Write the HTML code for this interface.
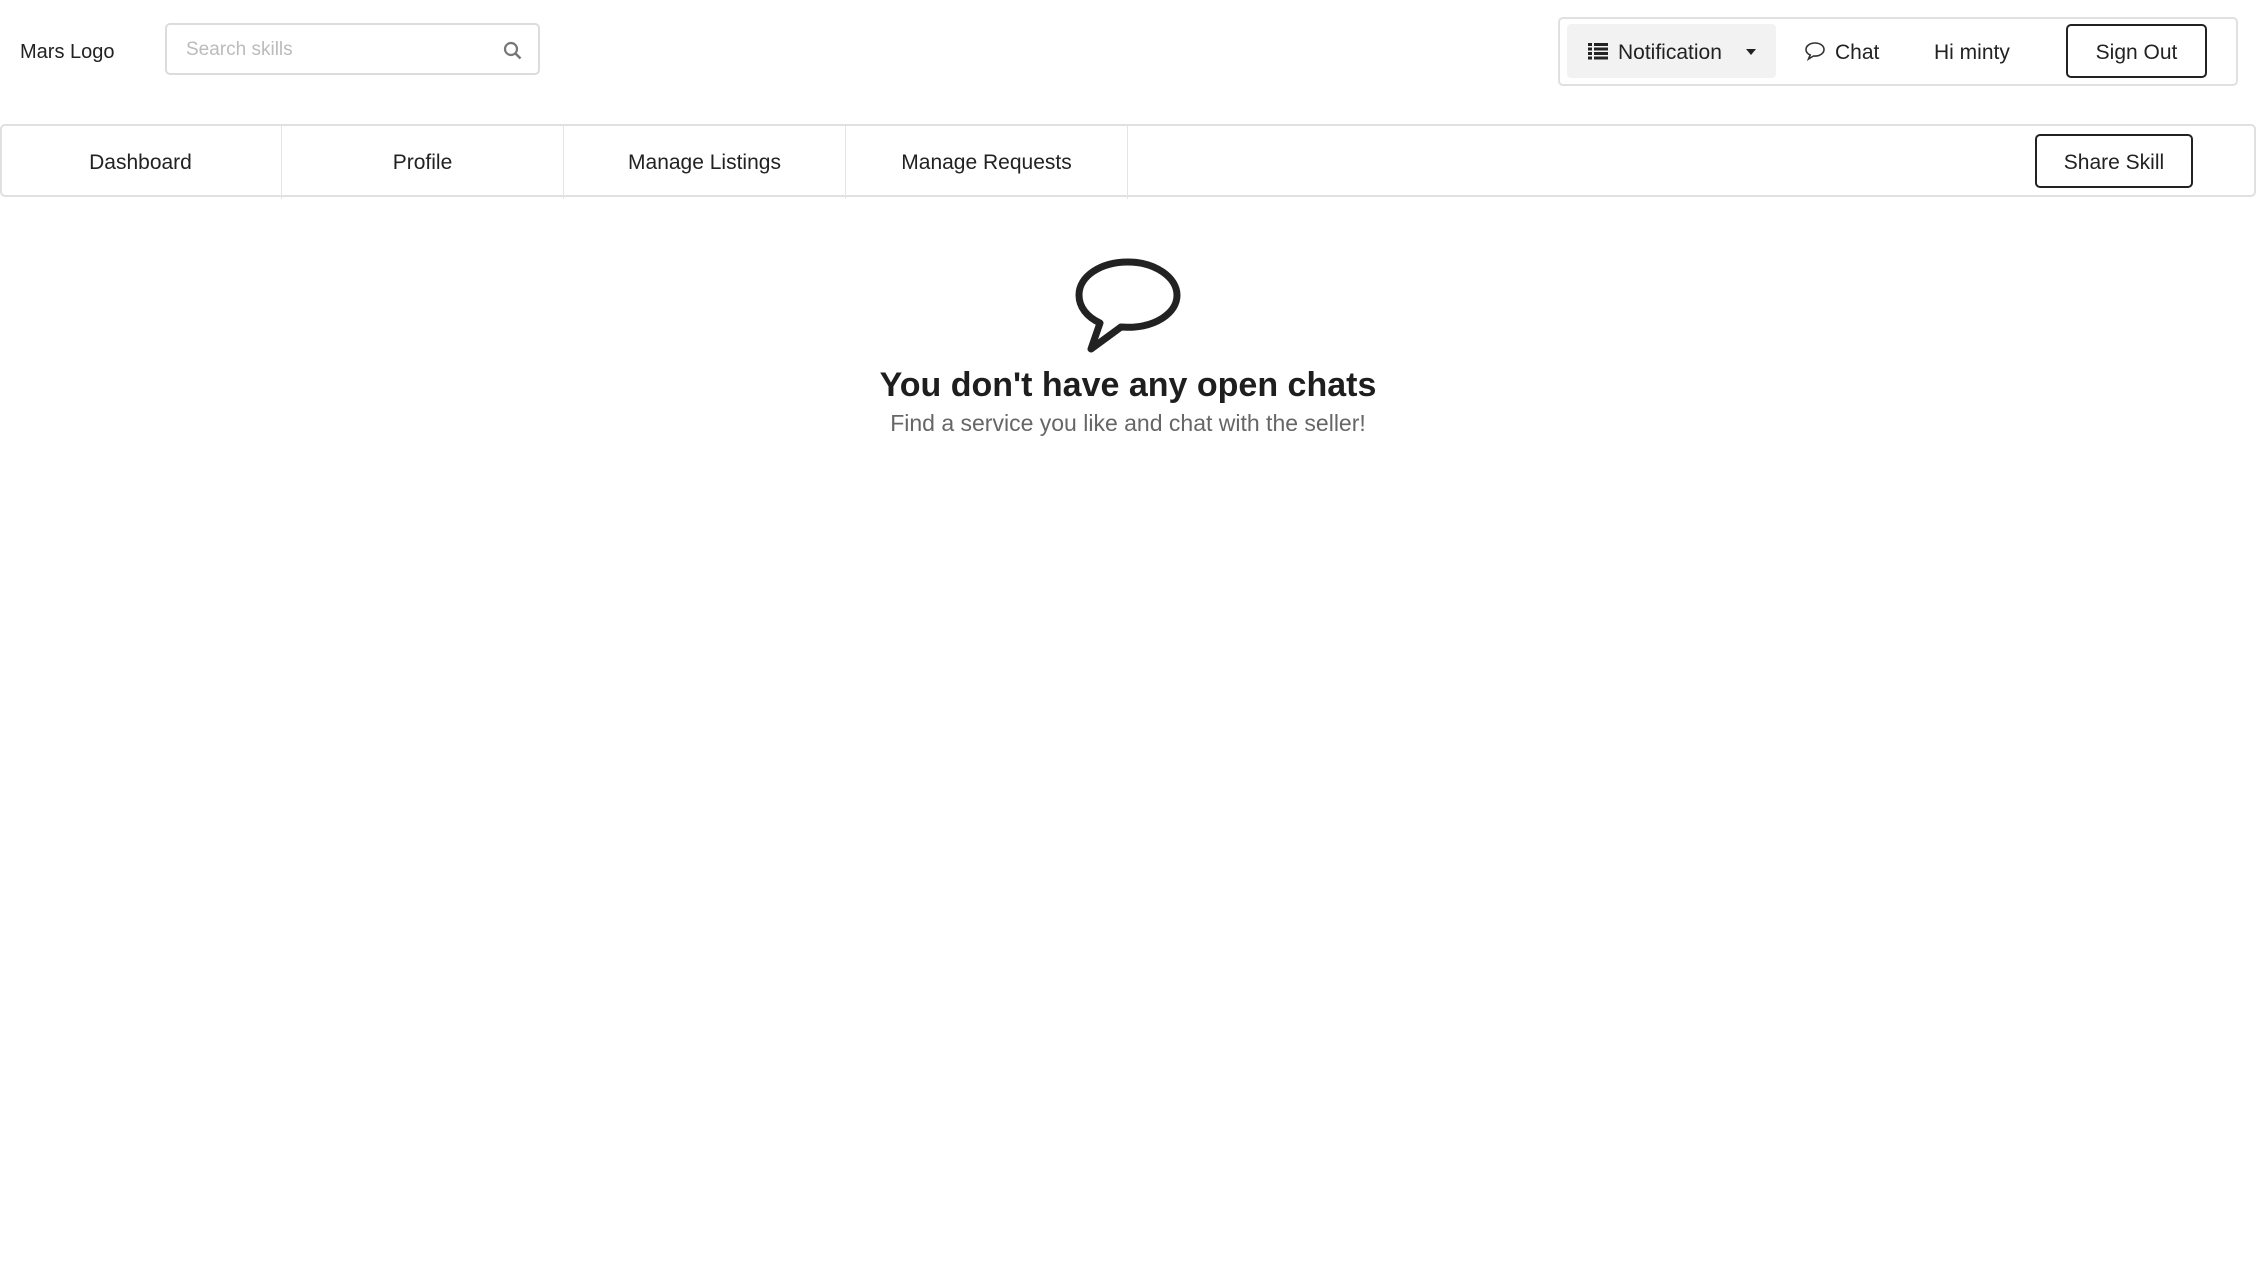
<!DOCTYPE html>
<html><head><style>
*{box-sizing:border-box;margin:0;padding:0}
body{width:2256px;height:1272px;background:#fff;font-family:"Liberation Sans",sans-serif;color:#222;position:relative;overflow:hidden}
.a{position:absolute}
.logo{left:20px;top:41px;font-size:20px}
.search{left:165px;top:23px;width:375px;height:52px;border:2px solid #dcdcdc;border-radius:5px}
.search span{position:absolute;left:19px;top:14px;font-size:19px;color:#bbb}
.grp{left:1558px;top:17px;width:680px;height:69px;border:2px solid #e0e0e0;border-radius:5px}
.notif{left:1567px;top:24px;width:209px;height:54px;background:#f2f2f2;border-radius:4px;font-size:21px}
.btn{border:2px solid #222;border-radius:5px;font-size:21px;text-align:center;background:#fff}
.nav{left:0;top:124px;width:2256px;height:73px;border:2px solid #e0e0e0;border-radius:5px}
.item{top:126px;height:73px;width:282px;border-right:1px solid #e4e4e4;font-size:21px;text-align:center;line-height:73px}
</style></head><body>
<div class="a logo">Mars Logo</div>
<div class="a search"><span>Search skills</span>
<svg class="a" style="left:336px;top:16px" width="20" height="20" viewBox="0 0 20 20"><circle cx="8" cy="8" r="6" fill="none" stroke="#777" stroke-width="2.2"/><line x1="12.5" y1="12.5" x2="17.5" y2="17.5" stroke="#777" stroke-width="2.5"/></svg></div>
<div class="a grp"></div>
<div class="a notif">
<svg class="a" style="left:21px;top:18px" width="20" height="18" viewBox="0 0 20 18"><g fill="#222"><rect x="0" y="1" width="4" height="3"/><rect x="6" y="1" width="14" height="3"/><rect x="0" y="5.5" width="4" height="3"/><rect x="6" y="5.5" width="14" height="3"/><rect x="0" y="10" width="4" height="3"/><rect x="6" y="10" width="14" height="3"/><rect x="0" y="14.5" width="4" height="3"/><rect x="6" y="14.5" width="14" height="3"/></g></svg>
<span class="a" style="left:51px;top:17px">Notification</span>
<svg class="a" style="left:178px;top:24px" width="12" height="8" viewBox="0 0 12 8"><path d="M1 1h10L6 7z" fill="#222"/></svg></div>
<svg class="a" style="left:1804px;top:41px" width="22" height="20" viewBox="0 0 22 20"><path d="M11 2C5.8 2 2 5 2 8.5c0 2.4 1.7 4.4 4.2 5.5L4.5 18l5-3c.5 0 1 .1 1.5.1 5.2 0 9-3 9-6.6S16.2 2 11 2z" fill="none" stroke="#333" stroke-width="1.6"/></svg>
<div class="a" style="left:1835px;top:41px;font-size:21px">Chat</div>
<div class="a" style="left:1934px;top:41px;font-size:21px">Hi minty</div>
<div class="a btn" style="left:2066px;top:24px;width:141px;height:54px;line-height:53px">Sign Out</div>
<div class="a nav"></div>
<div class="a item" style="left:0">Dashboard</div>
<div class="a item" style="left:282px">Profile</div>
<div class="a item" style="left:564px">Manage Listings</div>
<div class="a item" style="left:846px">Manage Requests</div>
<div class="a btn" style="left:2035px;top:134px;width:158px;height:54px;line-height:53px">Share Skill</div>
<svg class="a" style="left:1072px;top:257px" width="112" height="96" viewBox="0 0 112 96"><path d="M56 5C29 5 7 19 7 38c0 12 8 22 21 28l-9 26 30-22c2 0 5 .3 7 .3 27 0 49-14 49-32S83 5 56 5z" fill="none" stroke="#222" stroke-width="7" stroke-linejoin="round"/></svg>
<div class="a" style="left:0;width:2256px;top:366px;text-align:center;font-size:34px;font-weight:bold;color:#1e1e1e">You don't have any open chats</div>
<div class="a" style="left:0;width:2256px;top:410px;text-align:center;font-size:23px;color:#666">Find a service you like and chat with the seller!</div>
</body></html>
